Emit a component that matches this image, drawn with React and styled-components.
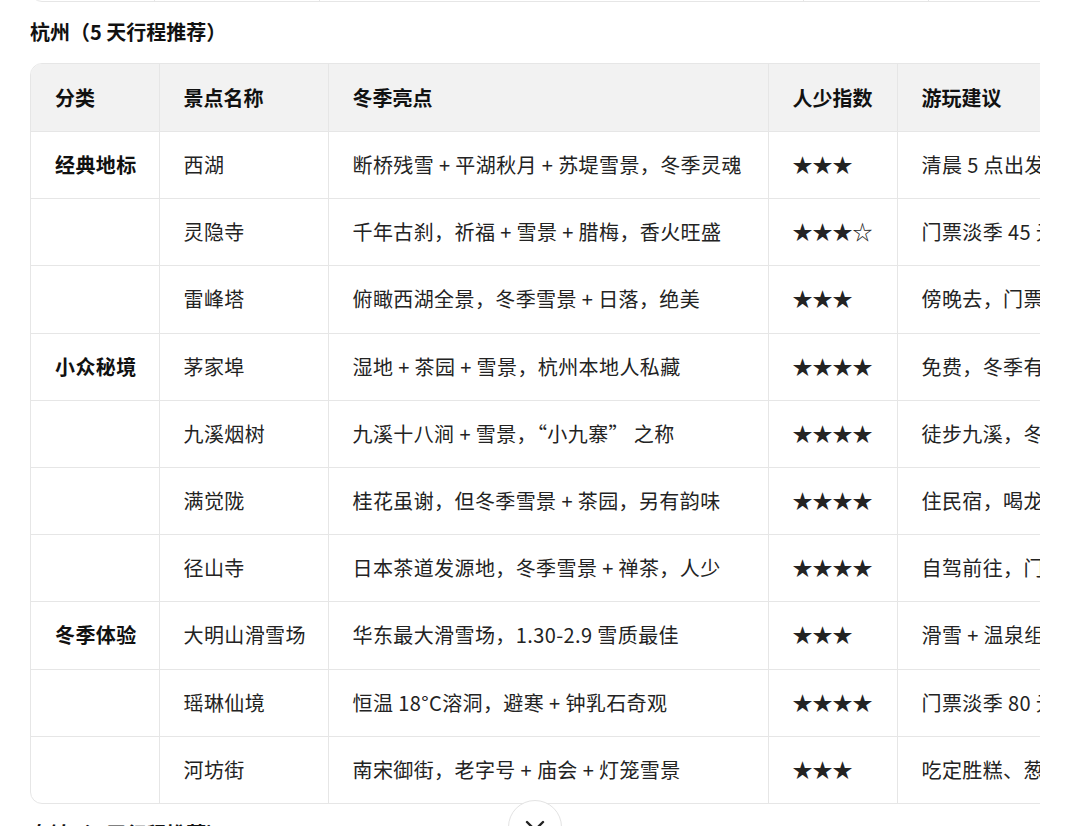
import React from "react";
import styled, { createGlobalStyle } from "styled-components";

const GlobalStyle = createGlobalStyle`
  html, body {
    margin: 0;
    padding: 0;
    background: #ffffff;
    overflow: hidden;
  }
  body {
    font-family: "Noto Sans CJK SC", "Noto Sans", sans-serif;
    color: #1f1f1f;
  }
`;

const Page = styled.div`
  height: 826px;
  padding: 0 40px 0 30px;
  overflow: hidden;
  position: relative;
`;

const PrevTable = styled.div`
  display: flex;
  height: 40px;
  margin-top: -40px;
  width: 1200px;
  border: 1px solid #e6e6e6;
  border-radius: 0 0 12px 12px;
`;

const PrevCell = styled.div`
  width: ${props => props.w}px;
  flex-shrink: 0;
  border-right: 1px solid #e6e6e6;
`;

const Clip = styled.div`
  width: 1010px;
  overflow: hidden;
`;

const Heading = styled.h3`
  margin: ${props => (props.bottom ? "16px 0 0" : "16px 0 17px")};
  font-size: 20px;
  line-height: 28px;
  font-weight: 600;
  color: #111;
`;

const TableBox = styled.div`
  width: 1240px;
  border: 1px solid #e6e6e6;
  border-radius: 12px;
  overflow: hidden;
`;

const Table = styled.table`
  width: 100%;
  table-layout: fixed;
  border-collapse: collapse;
  font-size: 20px;
  line-height: 28px;
`;

const Th = styled.th`
  height: 67px;
  padding: 0 24px;
  text-align: left;
  font-weight: 600;
  color: #111;
  background: #f2f2f2;
  border-right: 1px solid #e6e6e6;
  border-bottom: 1px solid #e6e6e6;
  white-space: nowrap;
`;

const Td = styled.td`
  height: 66.2px;
  padding: 0 24px;
  font-weight: ${props => (props.bold ? 600 : 400)};
  color: ${props => (props.bold ? "#111" : "#232323")};
  border-right: 1px solid #e6e6e6;
  border-bottom: ${props => (props.last ? "none" : "1px solid #e6e6e6")};
  white-space: nowrap;
  letter-spacing: ${props => (props.stars ? "0" : "0.4px")};
`;

const ScrollButton = styled.div`
  position: absolute;
  left: 508px;
  top: 800px;
  width: 54px;
  height: 54px;
  border-radius: 50%;
  border: 1px solid #e3e3e3;
  background: #fff;
  display: flex;
  justify-content: center;
  padding-top: 18px;
  box-sizing: border-box;
`;

const columns = [
  { title: "分类", width: 128 },
  { title: "景点名称", width: 169 },
  { title: "冬季亮点", width: 440 },
  { title: "人少指数", width: 129 },
  { title: "游玩建议", width: 374 }
];

const rows = [
  ["经典地标", "西湖", "断桥残雪 + 平湖秋月 + 苏堤雪景，冬季灵魂", "★★★", "清晨 5 点出发，避开人流"],
  ["", "灵隐寺", "千年古刹，祈福 + 雪景 + 腊梅，香火旺盛", "★★★☆", "门票淡季 45 元，飞来峰另计"],
  ["", "雷峰塔", "俯瞰西湖全景，冬季雪景 + 日落，绝美", "★★★", "傍晚去，门票 40 元"],
  ["小众秘境", "茅家埠", "湿地 + 茶园 + 雪景，杭州本地人私藏", "★★★★", "免费，冬季有雾凇"],
  ["", "九溪烟树", "九溪十八涧 + 雪景，“小九寨” 之称", "★★★★", "徒步九溪，冬季人少"],
  ["", "满觉陇", "桂花虽谢，但冬季雪景 + 茶园，另有韵味", "★★★★", "住民宿，喝龙井茶"],
  ["", "径山寺", "日本茶道发源地，冬季雪景 + 禅茶，人少", "★★★★", "自驾前往，门票免费"],
  ["冬季体验", "大明山滑雪场", "华东最大滑雪场，1.30-2.9 雪质最佳", "★★★", "滑雪 + 温泉组合"],
  ["", "瑶琳仙境", "恒温 18°C溶洞，避寒 + 钟乳石奇观", "★★★★", "门票淡季 80 元"],
  ["", "河坊街", "南宋御街，老字号 + 庙会 + 灯笼雪景", "★★★", "吃定胜糕、葱包桧"]
];

function ChevronDown() {
  return (
    <svg width="22" height="14" viewBox="0 0 22 14" fill="none">
      <path d="M3 3 L11 11 L19 3" stroke="#222" strokeWidth="2.4" strokeLinecap="round" strokeLinejoin="round" />
    </svg>
  );
}

export default function App() {
  return (
    <Page>
      <GlobalStyle />
      <Clip>
        <PrevTable>
          {[123, 164, 483, 124].map(w => (
            <PrevCell key={w} w={w} />
          ))}
        </PrevTable>
      </Clip>
      <Heading>杭州（5 天行程推荐）</Heading>
      <Clip>
        <TableBox>
          <Table>
            <colgroup>
              {columns.map(c => (
                <col key={c.title} style={{ width: c.width }} />
              ))}
            </colgroup>
            <thead>
              <tr>
                {columns.map(c => (
                  <Th key={c.title}>{c.title}</Th>
                ))}
              </tr>
            </thead>
            <tbody>
              {rows.map((r, i) => (
                <tr key={r[1]}>
                  <Td bold last={i === rows.length - 1}>{r[0]}</Td>
                  <Td last={i === rows.length - 1}>{r[1]}</Td>
                  <Td last={i === rows.length - 1}>{r[2]}</Td>
                  <Td stars last={i === rows.length - 1}>{r[3]}</Td>
                  <Td last={i === rows.length - 1}>{r[4]}</Td>
                </tr>
              ))}
            </tbody>
          </Table>
        </TableBox>
      </Clip>
      <Heading bottom>乌镇（2 天行程推荐）</Heading>
      <ScrollButton>
        <ChevronDown />
      </ScrollButton>
    </Page>
  );
}
